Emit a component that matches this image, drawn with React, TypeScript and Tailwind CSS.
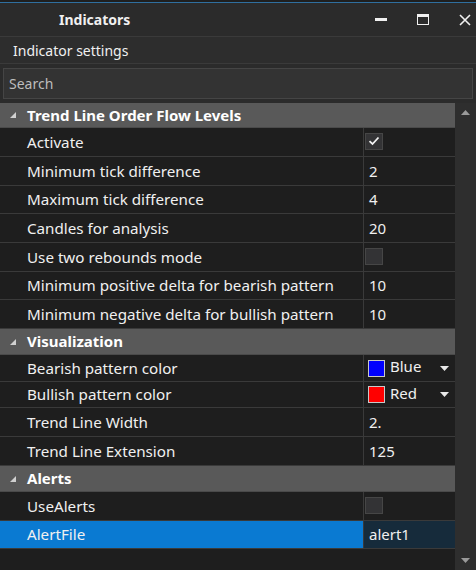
import React from "react";

type Row =
  | { kind: "header"; label: string; h: string }
  | { kind: "text"; label: string; value: string; h: string; selected?: boolean }
  | { kind: "check"; label: string; checked: boolean; h: string }
  | { kind: "color"; label: string; color: string; name: string; h: string };

const rows: Row[] = [
  { kind: "header", label: "Trend Line Order Flow Levels", h: "h-[25px]" },
  { kind: "check", label: "Activate", checked: true, h: "h-[29px]" },
  { kind: "text", label: "Minimum tick difference", value: "2", h: "h-[29px]" },
  { kind: "text", label: "Maximum tick difference", value: "4", h: "h-[28px]" },
  { kind: "text", label: "Candles for analysis", value: "20", h: "h-[29px]" },
  { kind: "check", label: "Use two rebounds mode", checked: false, h: "h-[29px]" },
  { kind: "text", label: "Minimum positive delta for bearish pattern", value: "10", h: "h-[28px]" },
  { kind: "text", label: "Minimum negative delta for bullish pattern", value: "10", h: "h-[29px]" },
  { kind: "header", label: "Visualization", h: "h-[26px]" },
  { kind: "color", label: "Bearish pattern color", color: "bg-[#0000ff]", name: "Blue", h: "h-[27px]" },
  { kind: "color", label: "Bullish pattern color", color: "bg-[#ff0000]", name: "Red", h: "h-[26px]" },
  { kind: "text", label: "Trend Line Width", value: "2.", h: "h-[29px]" },
  { kind: "text", label: "Trend Line Extension", value: "125", h: "h-[29px]" },
  { kind: "header", label: "Alerts", h: "h-[26px]" },
  { kind: "check", label: "UseAlerts", checked: false, h: "h-[29px]" },
  { kind: "text", label: "AlertFile", value: "alert1", h: "h-[28px]", selected: true },
];

function Expander() {
  return (
    <svg width="8" height="8" viewBox="0 0 8 8" className="ml-[9px] mr-[10px] shrink-0">
      <path d="M7 1 L7 7 L1 7 Z" fill="#d0d0d0" />
    </svg>
  );
}

function DropArrow() {
  return (
    <svg width="9" height="5" viewBox="0 0 9 5" className="ml-auto mr-[6px]">
      <path d="M0 0 L9 0 L4.5 5 Z" fill="#e8e8e8" />
    </svg>
  );
}

function GridRow({ row }: { row: Row }) {
  if (row.kind === "header") {
    return (
      <div className={`${row.h} flex items-center bg-[#595959] border-b border-[#4a4a4a]`}>
        <Expander />
        <span className="text-[15px] font-bold text-white">{row.label}</span>
      </div>
    );
  }
  const selected = row.kind === "text" && row.selected;
  return (
    <div className={`${row.h} flex border-b border-[#3a3a3a]`}>
      <div
        className={`w-[364px] shrink-0 flex items-center pl-[27px] border-r border-[#3a3a3a] ${
          selected ? "bg-[#0a7ad2]" : "bg-[#1e1e1e]"
        }`}
      >
        <span className="text-[15.2px] text-[#f0f0f0]">{row.label}</span>
      </div>
      <div
        className={`flex-1 flex items-center ${selected ? "bg-[#162b3b]" : "bg-[#1e1e1e]"}`}
      >
        {row.kind === "text" && (
          <span className="pl-[5px] text-[15px] text-[#f0f0f0]">{row.value}</span>
        )}
        {row.kind === "check" && (
          <div className="ml-[1px] mb-[2px] w-[18px] h-[17px] bg-[#333335] border border-[#464646] flex items-center justify-center">
            {row.checked && (
              <svg width="12" height="10" viewBox="0 0 12 10">
                <path d="M1.5 5.2 L4.5 8 L10.5 1.5" stroke="#f2f2f2" strokeWidth="1.8" fill="none" />
              </svg>
            )}
          </div>
        )}
        {row.kind === "color" && (
          <>
            <div className={`ml-[4px] w-[17px] h-[17px] border border-[#c8c8c8] ${row.color}`} />
            <span className="ml-[5px] mb-[3px] text-[15px] text-[#f0f0f0]">{row.name}</span>
            <DropArrow />
          </>
        )}
      </div>
    </div>
  );
}

export default function App() {
  return (
    <div
      className="w-[476px] h-[570px] bg-[#2b2b2b] flex flex-col overflow-hidden"
      style={{ fontFamily: '"Noto Sans", "Open Sans", sans-serif' }}
    >
      <div className="h-[2px] bg-[#1f1f1f]" />
      <div className="h-[1px] bg-[#2f6f9f]" />
      {/* Title bar */}
      <div className="h-[34px] flex items-center border-b border-[#3a3a3a] bg-[#2b2b2b]">
        <span className="ml-[59px] text-[14px] font-bold text-[#f0f0f0]">Indicators</span>
        <div className="ml-auto flex items-center">
          <div className="w-[12px] h-[3px] bg-[#f0f0f0] mr-[30px]" />
          <div className="w-[12px] h-[11px] border border-[#f0f0f0] border-t-[3px] mr-[30px]" />
          <svg width="12" height="12" viewBox="0 0 12 12" className="mr-[5px]">
            <path d="M1 1 L11 11 M11 1 L1 11" stroke="#f0f0f0" strokeWidth="1.6" />
          </svg>
        </div>
      </div>
      {/* Subheader */}
      <div className="h-[27px] flex items-center pl-[13px] bg-[#2d2d2d] border-b border-[#3a3a3a]">
        <span className="text-[14px] text-[#f0f0f0]">Indicator settings</span>
      </div>
      {/* Search */}
      <div className="h-[39px] px-[3px] pt-[4px]">
        <div className="h-[31px] bg-[#333333] border border-[#454545] flex items-center pl-[5px]">
          <span className="text-[14px] text-[#bdbdbd]">Search</span>
        </div>
      </div>
      {/* Property grid */}
      <div className="flex-1 flex bg-[#1e1e1e]">
        <div className="w-[455px] flex flex-col">
          {rows.map((r, i) => (
            <GridRow key={i} row={r} />
          ))}
        </div>
        <div className="flex-1 bg-[#2e2e2e] flex flex-col items-center justify-between py-[7px]">
          <svg width="9" height="5" viewBox="0 0 9 5">
            <path d="M0 5 L9 5 L4.5 0 Z" fill="#9a9a9a" />
          </svg>
          <svg width="9" height="5" viewBox="0 0 9 5">
            <path d="M0 0 L9 0 L4.5 5 Z" fill="#9a9a9a" />
          </svg>
        </div>
      </div>
    </div>
  );
}
